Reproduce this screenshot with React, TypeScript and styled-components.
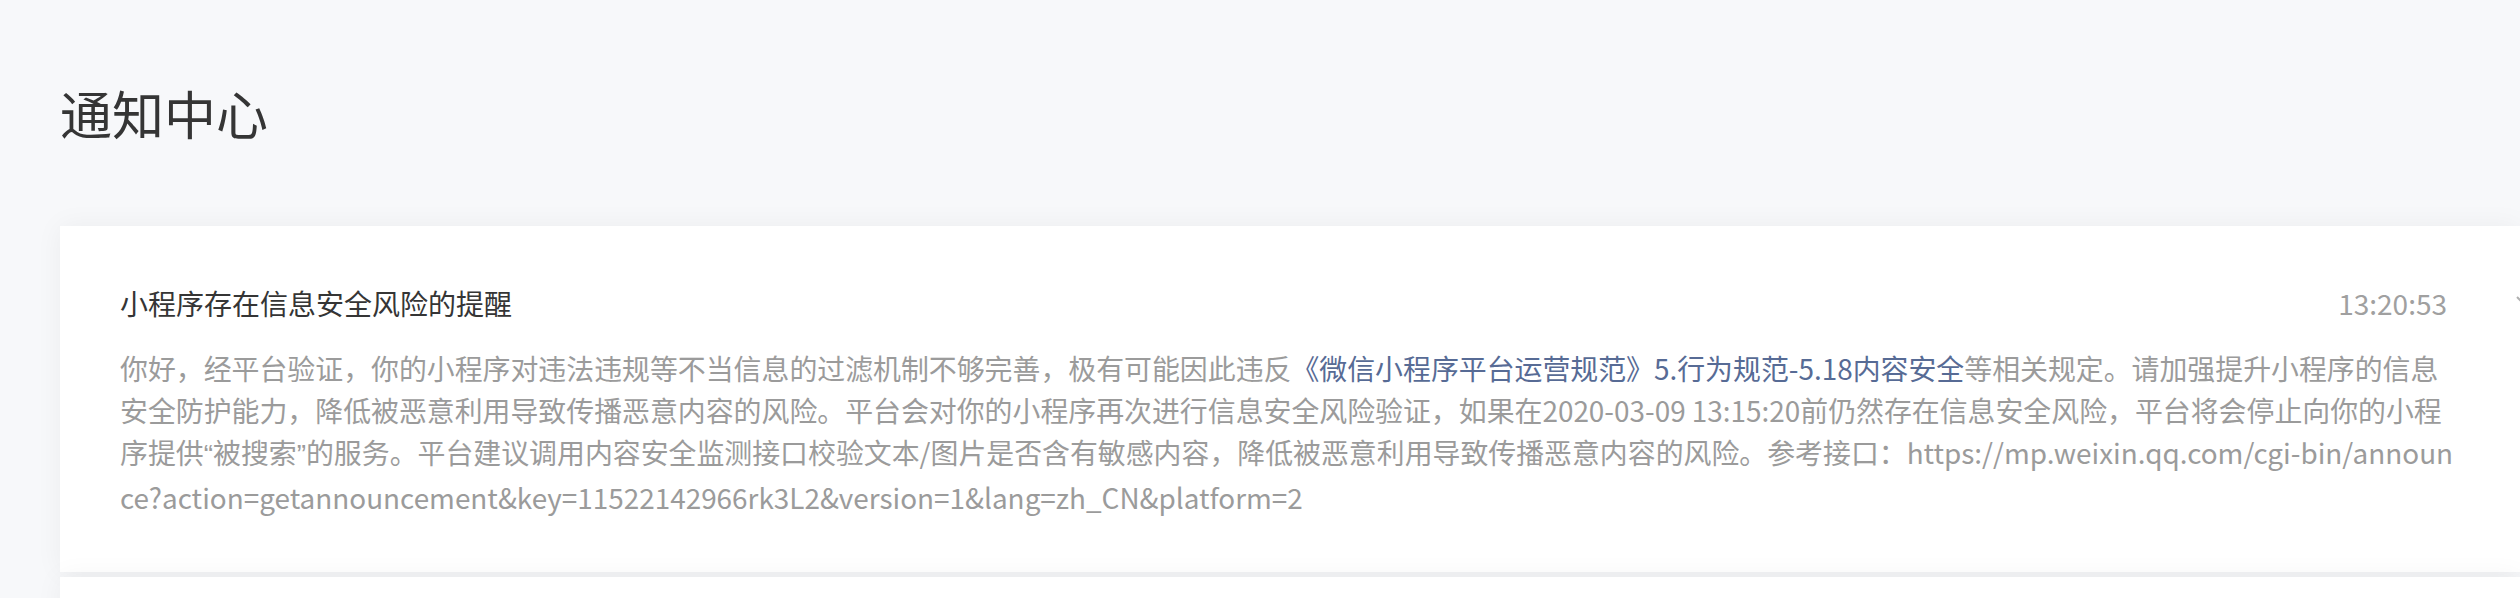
import React from "react";
import styled, { createGlobalStyle } from "styled-components";

const GlobalStyle = createGlobalStyle`
  html, body {
    margin: 0;
    padding: 0;
    background: #f7f8fa;
    overflow: hidden;
  }
  body {
    font-family: "Noto Sans CJK SC", "Noto Sans", sans-serif;
  }
`;

const Page = styled.div`
  padding: 77px 0 0 60px;
  min-height: 598px;
  box-sizing: border-box;
`;

const PageTitle = styled.h1`
  margin: 0;
  font-size: 52px;
  line-height: 72px;
  font-weight: 400;
  color: #353535;
`;

const List = styled.div`
  margin-top: 77px;
  display: flex;
  flex-direction: column;
  gap: 5px;
`;

const Card = styled.section`
  position: relative;
  background: #ffffff;
  box-shadow: 0 0 26px rgba(0, 0, 0, 0.05);
  padding: 56px 62px 54px 60px;
  min-height: 200px;
`;

const CardHeader = styled.div`
  display: flex;
  align-items: center;
  justify-content: space-between;
  margin-bottom: 23px;
`;

const CardTitle = styled.h2`
  margin: 0;
  font-size: 28px;
  line-height: 42px;
  font-weight: 400;
  color: #353535;
`;

const Time = styled.span`
  font-size: 28px;
  line-height: 42px;
  color: #a0a0a0;
  margin-right: 11px;
`;

const Body = styled.p`
  margin: 0;
  font-size: 27.9px;
  line-height: 42px;
  color: #9b9b9b;
  word-break: break-all;
`;

const Link = styled.a`
  color: #576b95;
  text-decoration: none;
`;

const QuoteMark = styled.span`
  font-family: "Liberation Sans", sans-serif;
`;

const Toggle = styled.span`
  position: absolute;
  top: 70px;
  left: calc(100% - 4px);
  display: flex;
  color: #b0b0b0;
`;

const ChevronDown: React.FC = () => (
  <svg width="20" height="12" viewBox="0 0 20 12" fill="none">
    <path d="M1 1 L10 10 L19 1" stroke="currentColor" strokeWidth="2" />
  </svg>
);

const url =
  "https://mp.weixin.qq.com/cgi-bin/announce?action=getannouncement&key=11522142966rk3L2&version=1&lang=zh_CN&platform=2";

export default function App() {
  return (
    <>
      <GlobalStyle />
      <Page>
        <PageTitle>通知中心</PageTitle>
        <List>
          <Card>
            <CardHeader>
              <CardTitle>小程序存在信息安全风险的提醒</CardTitle>
              <Time>13:20:53</Time>
            </CardHeader>
            <Toggle>
              <ChevronDown />
            </Toggle>
            <Body>
              {"你好，经平台验证，你的小程序对违法违规等不当信息的过滤机制不够完善，极有可能因此违反"}
              <Link href="#">{"《微信小程序平台运营规范》5.行为规范-5.18内容安全"}</Link>
              {"等相关规定。请加强提升小程序的信息安全防护能力，降低被恶意利用导致传播恶意内容的风险。平台会对你的小程序再次进行信息安全风险验证，如果在2020-03-09 13:15:20前仍然存在信息安全风险，平台将会停止向你的小程序提供"}
              <QuoteMark>“</QuoteMark>
              {"被搜索"}
              <QuoteMark>”</QuoteMark>
              {"的服务。平台建议调用内容安全监测接口校验文本/图片是否含有敏感内容，降低被恶意利用导致传播恶意内容的风险。参考接口："}
              {url}
            </Body>
          </Card>
          <Card />
        </List>
      </Page>
    </>
  );
}
